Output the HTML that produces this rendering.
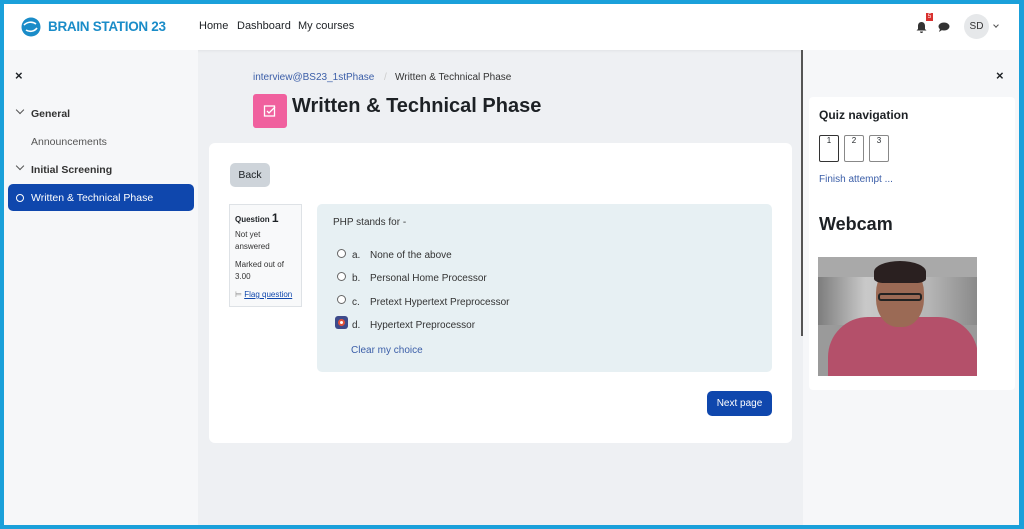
<!DOCTYPE html>
<html><head><style>
*{box-sizing:border-box;margin:0;padding:0}
body{width:1024px;height:529px;overflow:hidden;background:#1aa0da;font-family:"Liberation Sans",sans-serif;color:#1d2125;position:relative}
.frame{position:absolute;left:4px;top:4px;width:1015px;height:521px;background:#eef0f3;overflow:hidden}
.hdr{position:absolute;left:0;top:0;width:1015px;height:46px;background:#fff;box-shadow:0 1px 3px rgba(0,0,0,.06)}
.abs{position:absolute}
.left{position:absolute;left:0;top:46px;width:194px;height:475px;background:#f6f7f9}
.right{position:absolute;left:799px;top:46px;width:216px;height:475px;background:#f6f7f9}
.nav{font-size:11px;color:#1d2125}
.chev{position:absolute;width:6px;height:6px;border-right:1.3px solid #555;border-bottom:1.3px solid #555;transform:rotate(45deg)}
</style></head><body>
<div class="frame">
<div class="hdr">
 <svg class="abs" style="left:16px;top:12px" width="22" height="22" viewBox="0 0 22 22"><circle cx="11" cy="11" r="9.5" fill="#1a8cc8"/><path d="M4 9c3-3 8-4 12-1M6 14c3 2 8 2 11-2" stroke="#fff" stroke-width="1.6" fill="none"/></svg>
 <div class="abs" style="left:44px;top:15px;font-size:13.5px;font-weight:bold;color:#1a8cc8;letter-spacing:-.3px">BRAIN STATION 23</div>
 <div class="abs nav" style="left:195px;top:16px">Home</div>
 <div class="abs nav" style="left:233px;top:16px">Dashboard</div>
 <div class="abs nav" style="left:294px;top:16px">My courses</div>
 <svg class="abs" style="left:912px;top:17px" width="11" height="12" viewBox="0 0 11 12"><path d="M5.5 1c2.5 0 3.5 2 3.5 4v3l1.5 1.5H.5L2 8V5c0-2 1-4 3.5-4zM4 10.5h3a1.5 1.5 0 0 1-3 0z" fill="#333"/></svg>
 <div class="abs" style="left:922px;top:9px;width:7px;height:8px;background:#d9312f;color:#fff;font-size:6px;text-align:center;line-height:8px">5</div>
 <svg class="abs" style="left:934px;top:18px" width="12" height="10" viewBox="0 0 12 10"><ellipse cx="6" cy="4.5" rx="5.5" ry="4" fill="#333"/><path d="M2 7l-1 3 3-2z" fill="#333"/></svg>
 <div class="abs" style="left:960px;top:10px;width:25px;height:25px;border-radius:50%;background:#e6e8ea;font-size:10px;color:#333;text-align:center;line-height:25px">SD</div>
 <div class="chev" style="left:990px;top:19px;width:4px;height:4px;border-width:1px"></div>
</div>
<div class="left">
 <div class="abs" style="left:11px;top:18px;font-size:13px;font-weight:bold">&#215;</div>
 <div class="chev" style="left:13px;top:57px"></div>
 <div class="abs" style="left:27px;top:58px;font-size:10.5px;font-weight:bold;color:#333">General</div>
 <div class="abs" style="left:27px;top:86px;font-size:10.5px;color:#555">Announcements</div>
 <div class="chev" style="left:13px;top:113px"></div>
 <div class="abs" style="left:27px;top:114px;font-size:10.5px;font-weight:bold;color:#333">Initial Screening</div>
 <div class="abs" style="left:4px;top:134px;width:186px;height:27px;background:#0f47ad;border-radius:5px"></div>
 <div class="abs" style="left:12px;top:144px;width:8px;height:8px;border:1.3px solid #fff;border-radius:50%"></div>
 <div class="abs" style="left:27px;top:142px;font-size:10.5px;color:#fff">Written &amp; Technical Phase</div>
</div>
<div class="abs" style="left:249px;top:68px;font-size:10px;color:#3b5ea8">interview@BS23_1stPhase</div>
<div class="abs" style="left:380px;top:68px;font-size:10px;color:#ccc">/</div>
<div class="abs" style="left:391px;top:68px;font-size:10px;color:#333">Written &amp; Technical Phase</div>
<div class="abs" style="left:249px;top:90px;width:34px;height:34px;background:#f0609e;border-radius:3px"></div>
<svg class="abs" style="left:259px;top:100px" width="14" height="14" viewBox="0 0 14 14"><rect x="1.5" y="2" width="10" height="10" fill="none" stroke="#fff" stroke-width="1.3"/><path d="M4 7l2 2 6-6" stroke="#fff" stroke-width="1.3" fill="none"/></svg>
<div class="abs" style="left:288px;top:91px;font-size:20px;font-weight:bold;color:#1d2125">Written &amp; Technical Phase</div>
<div class="abs" style="left:205px;top:139px;width:583px;height:300px;background:#fff;border-radius:6px"></div>
<div class="abs" style="left:226px;top:159px;width:40px;height:24px;background:#ced4da;border-radius:5px;font-size:10.5px;color:#1d2125;text-align:center;line-height:24px">Back</div>
<div class="abs" style="left:225px;top:200px;width:73px;height:103px;background:#f8f9fa;border:1px solid #dee2e6"></div>
<div class="abs" style="left:231px;top:207px;font-size:8px;font-weight:bold">Question <span style="font-size:12px">1</span></div>
<div class="abs" style="left:231px;top:225px;font-size:8px;line-height:12px;color:#333">Not yet<br>answered</div>
<div class="abs" style="left:231px;top:255px;font-size:8px;line-height:12px;color:#333">Marked out of<br>3.00</div>
<div class="abs" style="left:231px;top:286px;font-size:8px;color:#888">&#8872; <span style="color:#0f47ad;text-decoration:underline">Flag question</span></div>
<div class="abs" style="left:313px;top:200px;width:455px;height:168px;background:#e7f0f3;border-radius:5px"></div>
<div class="abs" style="left:329px;top:213px;font-size:10px;color:#333">PHP stands for -</div>
<div style="font-size:10px;color:#333">
 <div class="abs" style="left:333px;top:245px;width:9px;height:9px;border:1px solid #666;border-radius:50%;background:#fff"></div><div class="abs" style="left:348px;top:246px">a.</div><div class="abs" style="left:366px;top:246px">None of the above</div>
 <div class="abs" style="left:333px;top:268px;width:9px;height:9px;border:1px solid #666;border-radius:50%;background:#fff"></div><div class="abs" style="left:348px;top:269px">b.</div><div class="abs" style="left:366px;top:269px">Personal Home Processor</div>
 <div class="abs" style="left:333px;top:291px;width:9px;height:9px;border:1px solid #666;border-radius:50%;background:#fff"></div><div class="abs" style="left:348px;top:293px">c.</div><div class="abs" style="left:366px;top:293px">Pretext Hypertext Preprocessor</div>
 <div class="abs" style="left:331px;top:312px;width:13px;height:13px;border-radius:3px;background:#3d4a8a"></div><div class="abs" style="left:334px;top:315px;width:7px;height:7px;border-radius:50%;background:#fff;border:2px solid #e0503a"></div><div class="abs" style="left:348px;top:316px">d.</div><div class="abs" style="left:366px;top:316px">Hypertext Preprocessor</div>
 <div class="abs" style="left:347px;top:341px;color:#3b5ea8">Clear my choice</div>
</div>
<div class="abs" style="left:703px;top:387px;width:65px;height:25px;background:#0f47ad;border-radius:5px;font-size:10px;color:#fff;text-align:center;line-height:25px">Next page</div>
<div class="abs" style="left:797px;top:46px;width:2px;height:286px;background:#555"></div>
<div class="right">
 <div class="abs" style="left:193px;top:18px;font-size:13px;font-weight:bold">&#215;</div>
 <div class="abs" style="left:6px;top:47px;width:206px;height:293px;background:#fff;border-radius:4px"></div>
 <div class="abs" style="left:16px;top:58px;font-size:12px;font-weight:bold">Quiz navigation</div>
 <div class="abs" style="left:16px;top:85px;width:20px;height:27px;border:1.5px solid #333;border-radius:2px;font-size:8px;text-align:center">1</div>
 <div class="abs" style="left:41px;top:85px;width:20px;height:27px;border:1px solid #888;border-radius:2px;font-size:8px;text-align:center">2</div>
 <div class="abs" style="left:66px;top:85px;width:20px;height:27px;border:1px solid #888;border-radius:2px;font-size:8px;text-align:center">3</div>
 <div class="abs" style="left:16px;top:124px;font-size:10px;color:#3b5ea8">Finish attempt ...</div>
 <div class="abs" style="left:16px;top:164px;font-size:18px;font-weight:bold">Webcam</div>
 <div class="abs" style="left:15px;top:207px;width:159px;height:119px;background:linear-gradient(90deg,#7d7d7d,#c9c9c9 30%,#b5b5b5 70%,#8a8a8a);overflow:hidden">
  <div class="abs" style="left:0;top:0;width:159px;height:20px;background:#a9a9a9"></div>
  <div class="abs" style="left:0;top:68px;width:159px;height:51px;background:#9a9a9a"></div>
  <div class="abs" style="left:10px;top:60px;width:150px;height:70px;background:#b4506a;border-radius:40px 40px 0 0"></div>
  <div class="abs" style="left:58px;top:8px;width:48px;height:62px;background:#9b6a55;border-radius:45%"></div>
  <div class="abs" style="left:56px;top:4px;width:52px;height:22px;background:#2a2020;border-radius:50% 50% 20% 20%"></div>
  <div class="abs" style="left:60px;top:36px;width:44px;height:8px;border:2px solid #222;border-radius:3px"></div>
 </div>
</div>
</div>
</body></html>
